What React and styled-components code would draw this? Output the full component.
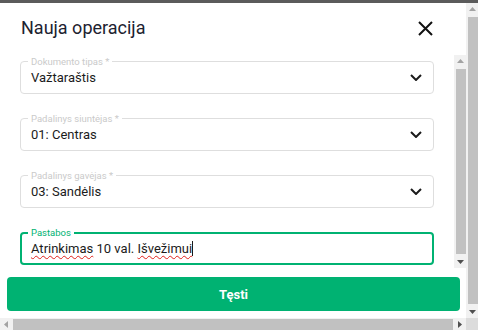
import React from "react";
import styled, { createGlobalStyle } from "styled-components";

const GlobalStyle = createGlobalStyle`
  html, body { margin: 0; padding: 0; overflow: hidden; background: #fff; }
  * { box-sizing: border-box; }
  body { font-family: Roboto, "Liberation Sans", sans-serif; }
`;

const Backdrop = styled.div`
  height: 3px;
  background: #5b5b5b;
`;

const Viewport = styled.div`
  width: 478px;
  height: 327px;
  display: grid;
  grid-template-columns: 466px 12px;
  grid-template-rows: 315px 12px;
`;

/* scrollbar chrome */
const Bar = styled.div`
  display: flex;
  flex-direction: ${(p) => (p.$horizontal ? "row" : "column")};
  background: #f1f1f1;
`;

const ArrowButton = styled.div`
  flex: none;
  width: 12px;
  height: 12px;
  display: flex;
  align-items: center;
  justify-content: center;
`;

const Track = styled.div`
  flex: 1;
  display: flex;
  flex-direction: ${(p) => (p.$horizontal ? "row" : "column")};
  padding: ${(p) => (p.$horizontal ? "1px 1px 0 1px" : "2px 0 2px 2px")};
`;

const Thumb = styled.div`
  flex: 1;
  background: #c1c1c1;
`;

const Corner = styled.div`
  background: #dcdcdc;
`;

const Triangle = ({ dir, color }) => {
  const pts = {
    up: "0,4 7,4 3.5,0",
    down: "0,0 7,0 3.5,4",
    left: "4,0 4,7 0,3.5",
    right: "0,0 0,7 4,3.5",
  }[dir];
  const h = dir === "up" || dir === "down";
  return (
    <svg width={h ? 7 : 4} height={h ? 4 : 7}>
      <polygon points={pts} fill={color} />
    </svg>
  );
};

const Scrollbar = ({ horizontal }) => (
  <Bar $horizontal={horizontal}>
    <ArrowButton>
      <Triangle dir={horizontal ? "left" : "up"} color="#a3a3a3" />
    </ArrowButton>
    <Track $horizontal={horizontal}>
      <Thumb />
    </Track>
    <ArrowButton>
      <Triangle dir={horizontal ? "right" : "down"} color="#505050" />
    </ArrowButton>
  </Bar>
);

/* dialog */
const Dialog = styled.div`
  background: #fff;
  display: flex;
  flex-direction: column;
  overflow: hidden;
`;

const Header = styled.div`
  flex: none;
  height: 52px;
  display: flex;
  justify-content: space-between;
  align-items: flex-start;
  padding: 13px 33px 0 21px;
`;

const Title = styled.h2`
  margin: 0;
  font-size: 18px;
  line-height: 24px;
  font-weight: 400;
  color: #1d2230;
`;

const CloseButton = styled.button`
  border: none;
  background: none;
  padding: 0;
  margin-top: 5px;
  width: 15px;
  height: 15px;
  display: flex;
  cursor: pointer;
`;

const Body = styled.div`
  flex: none;
  height: 213px;
  display: flex;
`;

const Content = styled.div`
  flex: 1;
  padding: 6px 20px 0 20px;
  display: flex;
  flex-direction: column;
  gap: 24px;
`;

const Field = styled.div`
  position: relative;
  flex: none;
  height: 33px;
  border: ${(p) => (p.$focused ? "2px solid #00b272" : "1px solid #dedede")};
  border-radius: 4px;
  display: flex;
  align-items: center;
  justify-content: space-between;
  padding: 0 ${(p) => (p.$focused ? "11px" : "11px")} 0 ${(p) => (p.$focused ? "9px" : "10px")};
`;

const Label = styled.span`
  position: absolute;
  top: ${(p) => (p.$focused ? "-7px" : "-6px")};
  left: ${(p) => (p.$focused ? "6px" : "7px")};
  padding: 0 3px;
  background: #fff;
  font-size: 9.5px;
  line-height: 11px;
  color: ${(p) => (p.$focused ? "#00b272" : "#cacaca")};
  white-space: nowrap;
`;

const Value = styled.span`
  font-size: 13px;
  line-height: 16px;
  color: #1b1b1b;
  white-space: nowrap;
`;

const Misspelled = styled.span`
  text-decoration: underline wavy #e0201b;
  text-decoration-thickness: 1px;
  text-underline-offset: 2px;
`;

const Caret = styled.span`
  display: inline-block;
  width: 1px;
  height: 15px;
  background: #1b1b1b;
  vertical-align: -3px;
`;

const Footer = styled.div`
  flex: none;
  padding: 9px 6px 0 7px;
`;

const SubmitButton = styled.button`
  width: 100%;
  height: 34px;
  border: none;
  border-radius: 4px;
  background: #00b272;
  color: #fff;
  font-family: inherit;
  font-size: 13px;
  font-weight: 700;
  cursor: pointer;
`;

const Chevron = () => (
  <svg width="12" height="7" viewBox="0 0 12 7" fill="none">
    <path d="M1 1l5 5 5-5" stroke="#1b1b1b" strokeWidth="2" />
  </svg>
);

const selects = [
  { label: "Dokumento tipas *", value: "Važtaraštis" },
  { label: "Padalinys siuntėjas *", value: "01: Centras" },
  { label: "Padalinys gavėjas *", value: "03: Sandėlis" },
];

export default function App() {
  return (
    <>
      <GlobalStyle />
      <Backdrop />
      <Viewport>
        <Dialog>
          <Header>
            <Title>Nauja operacija</Title>
            <CloseButton aria-label="Uždaryti">
              <svg width="15" height="15" viewBox="0 0 15 15">
                <path d="M1 1l13 13M14 1L1 14" stroke="#111" strokeWidth="2" />
              </svg>
            </CloseButton>
          </Header>
          <Body>
            <Content>
              {selects.map((s) => (
                <Field key={s.label}>
                  <Label>{s.label}</Label>
                  <Value>{s.value}</Value>
                  <Chevron />
                </Field>
              ))}
              <Field $focused>
                <Label $focused>Pastabos</Label>
                <Value>
                  <Misspelled>Atrinkimas</Misspelled> 10 val. <Misspelled>Išvežimui</Misspelled>
                  <Caret />
                </Value>
              </Field>
            </Content>
            <Scrollbar />
          </Body>
          <Footer>
            <SubmitButton>Tęsti</SubmitButton>
          </Footer>
        </Dialog>
        <Scrollbar />
        <Scrollbar horizontal />
        <Corner />
      </Viewport>
    </>
  );
}
